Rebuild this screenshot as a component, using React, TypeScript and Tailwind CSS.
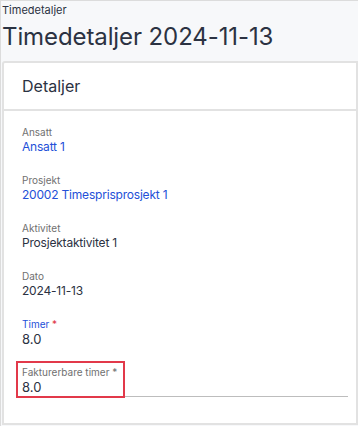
import * as React from 'react';

const fields = [
  { label: 'Ansatt', value: 'Ansatt 1', link: true },
  { label: 'Prosjekt', value: '20002 Timesprisprosjekt 1', link: true },
  { label: 'Aktivitet', value: 'Prosjektaktivitet 1' },
  { label: 'Dato', value: '2024-11-13' },
];

export default function App() {
  return (
    <main
      className="w-[358px] h-[426px] overflow-hidden bg-[#f7f8fa] border-t border-l border-[#dcdcdc] text-[#2b3242]"
      style={{ fontFamily: 'Inter, "Noto Sans", sans-serif' }}
    >
      <div className="px-[1px] pt-[2px] text-[11px] leading-[14px] text-[#2b3242]">Timedetaljer</div>
      <h1 className="px-[1px] text-[24px] leading-[40px] tracking-[-0.1px]">Timedetaljer 2024-11-13</h1>
      <section className="ml-[1px] mt-[4px] h-[364px] bg-white border-2 border-[#e2e2e2] rounded-tl-[3px]">
        <div className="h-[48px] flex items-center px-[18px] border-b-2 border-[#e2e2e2] text-[16px]">
          Detaljer
        </div>
        <div className="pl-[18px] pr-[8px] pt-[14px] flex flex-col">
          {fields.map((f) => (
            <div key={f.label} className="h-[48px]">
              <div className="text-[10px] leading-[14px] text-[#707070]">{f.label}</div>
              <div
                className={`text-[12px] leading-[16px] tracking-[-0.2px] ${f.link ? 'text-[#2350d8]' : 'text-[#2b3242]'}`}
              >
                {f.value}
              </div>
            </div>
          ))}
          <div className="h-[48px]">
            <div className="text-[10px] leading-[14px] text-[#2350d8]">
              Timer <span className="text-[#e0303e]">*</span>
            </div>
            <div className="text-[13px] leading-[16px]">8.0</div>
          </div>
          <div className="relative">
            <div className="text-[10px] leading-[14px] text-[#707070]">
              Fakturerbare timer <span>*</span>
            </div>
            <div className="text-[13px] leading-[16px] pb-[1px] border-b border-[#bdbdbd]">8.0</div>
            <div className="absolute left-[-6px] top-[-4px] w-[109px] h-[37px] border-2 border-[#e2394a]" />
          </div>
        </div>
      </section>
    </main>
  );
}
